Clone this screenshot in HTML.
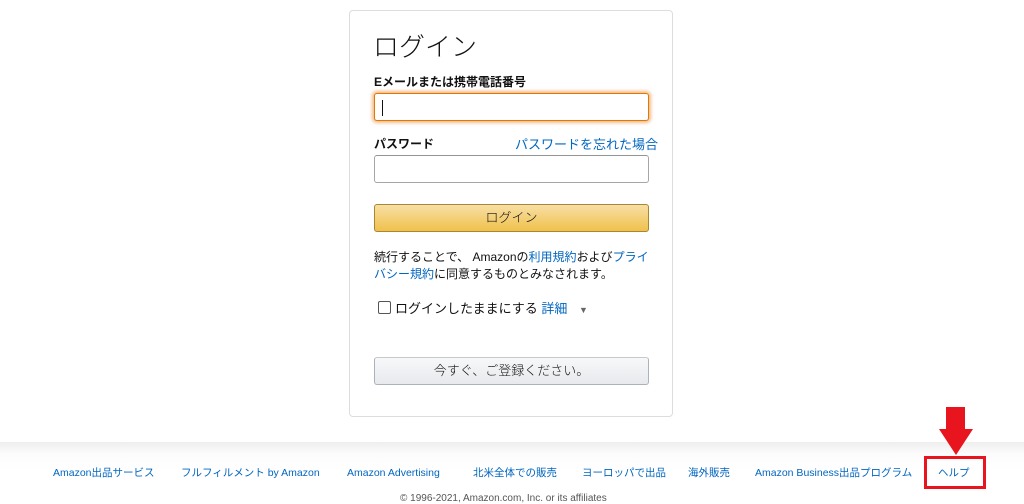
<!DOCTYPE html>
<html><head><meta charset="utf-8"><style>
body{margin:0;width:1024px;height:498px;overflow:hidden;background:#fff;font-family:"Liberation Sans","Noto Sans CJK JP",sans-serif;color:#111;position:relative}
.a{position:absolute}
.card{left:349px;top:10px;width:324px;height:407px;border:1px solid #ddd;border-radius:4px;box-sizing:border-box}
.in{left:374px;width:275px;height:28px;border:1px solid #a6a6a6;border-top-color:#949494;border-radius:3px;box-sizing:border-box;background:#fff}
.lbl{font-size:12px;font-weight:bold;left:374px}
.lnk{color:#0066c0}
.foot{left:0;top:442px;width:1024px;height:56px;background:linear-gradient(#eeeeee,#fcfcfc 12px,#fff 30px);}
.fl{top:466px;font-size:10.5px;line-height:14px;color:#0066c0;white-space:nowrap}
</style></head><body>
<div class="a card"></div>
<div class="a" style="left:373px;top:27px;font-size:26px;font-weight:300">ログイン</div>
<div class="a lbl" style="top:73px">Eメールまたは携帯電話番号</div>
<div class="a in" style="top:93px;border:1px solid #e77600;box-shadow:0 0 3px 2px rgba(228,121,17,.5)"><div class="a" style="left:7px;top:6px;width:1px;height:16px;background:#111"></div></div>
<div class="a lbl" style="top:135px">パスワード</div>
<div class="a lnk" style="left:515px;top:134px;font-size:13px">パスワードを忘れた場合</div>
<div class="a in" style="top:155px"></div>
<div class="a" style="left:374px;top:204px;width:275px;height:28px;box-sizing:border-box;border:1px solid #a88734;border-radius:3px;background:linear-gradient(#f7dfa5,#f0c14b);font-size:13px;text-align:center;line-height:26px;font-weight:300">ログイン</div>
<div class="a" style="left:374px;top:249px;width:285px;font-size:12px;line-height:17px">続行することで、 Amazonの<span class="lnk">利用規約</span>および<span class="lnk">プライバシー規約</span>に同意するものとみなされます。</div>
<div class="a" style="left:378px;top:301px;width:11px;height:11px;border:1px solid #555;border-radius:2px"></div>
<div class="a" style="left:395px;top:298px;font-size:13px">ログインしたままにする <span class="lnk">詳細</span> <span style="color:#666;font-size:9px;margin-left:8px">▼</span></div>
<div class="a" style="left:374px;top:357px;width:275px;height:28px;box-sizing:border-box;border:1px solid #adb1b8;border-top-color:#c6c8cc;border-radius:3px;background:linear-gradient(#f7f8fa,#e7e9ec);font-size:13px;text-align:center;line-height:26px;font-weight:300">今すぐ、ご登録ください。</div>
<div class="a foot"></div>
<div class="a fl" style="left:53px">Amazon出品サービス</div>
<div class="a fl" style="left:181px">フルフィルメント by Amazon</div>
<div class="a fl" style="left:347px">Amazon Advertising</div>
<div class="a fl" style="left:473px">北米全体での販売</div>
<div class="a fl" style="left:582px">ヨーロッパで出品</div>
<div class="a fl" style="left:688px">海外販売</div>
<div class="a fl" style="left:755px">Amazon Business出品プログラム</div>
<div class="a fl" style="left:938px">ヘルプ</div>
<div class="a" style="left:400px;top:493px;font-size:10px;color:#555">© 1996-2021, Amazon.com, Inc. or its affiliates</div>
<div class="a" style="left:924px;top:456px;width:62px;height:33px;border:3px solid #e8141e;box-sizing:border-box"></div>
<svg class="a" style="left:936px;top:405px" width="40" height="52"><polygon points="10,2 29,2 29,24 37,24 20,50 3,24 10,24" fill="#e8141e"/></svg>
</body></html>
